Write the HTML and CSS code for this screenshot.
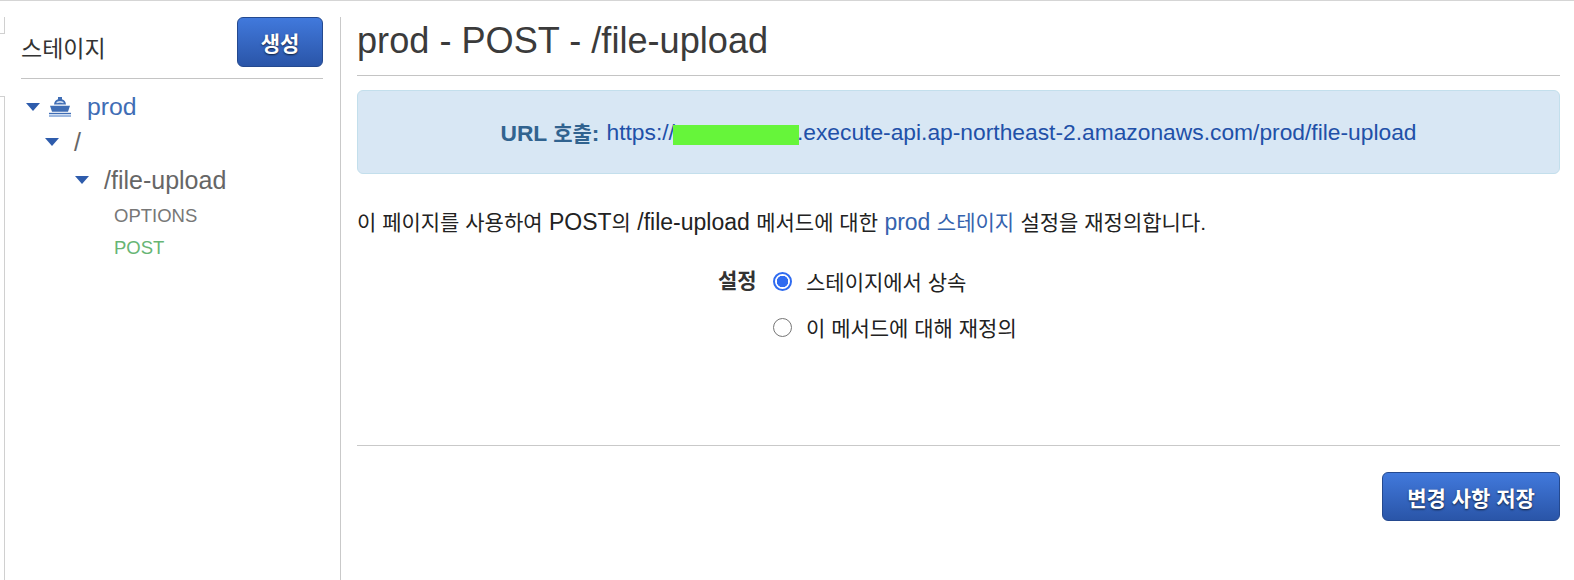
FILE: index.html
```html
<!DOCTYPE html>
<html lang="ko">
<head>
<meta charset="utf-8">
<title>prod - POST - /file-upload</title>
<link rel="stylesheet" href="styles.css">
</head>
<body>
<div class="page">
  <div class="rail">
    <div class="stub stub-top"></div>
    <div class="stub stub-bottom"></div>
  </div>
  <aside class="sidebar">
    <div class="side-head">
      <span class="side-title">스테이지</span>
      <button class="btn btn-create" type="button">생성</button>
    </div>
    <ul class="tree">
      <li class="row row-stage">
        <svg class="caret" viewBox="0 0 14 8"><path d="M0 0h14L7 8z"/></svg>
        <svg class="ship" viewBox="0 0 22 20"><path d="M9 0h4v2.200q3.500 1 4 5.300H5q.5-4.300 4-5.300z" fill="#3f6db5"/><path d="M7.500 5q3.500-1.800 7 0v1.200q-3.500-1-7 0z" fill="#cfdcf0"/><path d="M1 8.800h20l-2 6H3z" fill="#3f6db5"/><path d="M0 15.800h22v1.200H0z" fill="#3f6db5"/><path d="M0 17.500h22v2.500H0z" fill="#9db8e0"/></svg>
        <a class="stage-link">prod</a>
      </li>
      <li class="row row-root">
        <svg class="caret" viewBox="0 0 14 8"><path d="M0 0h14L7 8z"/></svg>
        <span class="res res-root">/</span>
      </li>
      <li class="row row-res">
        <svg class="caret" viewBox="0 0 14 8"><path d="M0 0h14L7 8z"/></svg>
        <span class="res">/file-upload</span>
      </li>
      <li class="method">OPTIONS</li>
      <li class="method method-post">POST</li>
    </ul>
  </aside>
  <main class="main">
    <h1 class="title">prod - POST - /file-upload</h1>
    <div class="invoke">
      <strong class="invoke-label">URL <span class="ko">호출</span>:</strong>
      <a class="invoke-url">https://<span class="redact"></span>.execute-api.ap-northeast-2.amazonaws.com/prod/file-upload</a>
    </div>
    <p class="desc"><span class="ko">이 페이지를 사용하여</span> POST<span class="ko">의</span> /file-upload <span class="ko">메서드에 대한</span> <a class="desc-link">prod <span class="ko">스테이지</span></a> <span class="ko">설정을 재정의합니다.</span></p>
    <div class="settings">
      <span class="settings-label">설정</span>
      <div class="options">
        <label class="option"><span class="radio radio-on"></span>스테이지에서 상속</label>
        <label class="option"><span class="radio"></span>이 메서드에 대해 재정의</label>
      </div>
    </div>
    <div class="actions">
      <button class="btn btn-save" type="button">변경 사항 저장</button>
    </div>
  </main>
</div>
</body>
</html>
```
FILE: styles.css
```css
* { box-sizing: border-box; }
html, body { margin: 0; height: 100%; background: #fff; overflow: hidden; }
body {
  font-family: "Liberation Sans", "Noto Sans CJK KR", sans-serif;
  color: #222;
}
.ko { font-size: 21px; }
.page {
  display: flex;
  height: 580px;
  border-top: 1px solid #d5d5d5;
}
.rail {
  width: 21px;
  flex: none;
  display: flex;
  flex-direction: column;
  padding-top: 16px;
}
.stub {
  width: 5px;
  border-right: 1px solid #d0d0d0;
}
.stub-top { height: 17px; border-bottom: 1px solid #d0d0d0; }
.stub-bottom { flex: 1; margin-top: 62px; border-top: 1px solid #d0d0d0; }
.sidebar {
  width: 319px;
  flex: none;
  padding: 16px 17px 0 0;
}
.side-head {
  display: flex;
  justify-content: space-between;
  align-items: flex-start;
  height: 62px;
  border-bottom: 1px solid #c4c4c4;
}
.side-title {
  font-size: 23px;
  line-height: 28px;
  margin-top: 18px;
  color: #333;
}
.btn {
  font-family: inherit;
  font-weight: 700;
  color: #fff;
  border: 1px solid #24498f;
  border-radius: 6px;
  background: linear-gradient(#4179dc, #2a55a8);
  text-shadow: 0 1px 2px rgba(0, 0, 0, .7);
  padding: 0;
}
.btn-create { width: 86px; height: 50px; font-size: 21px; }
.tree { list-style: none; margin: 0; padding: 0; }
.row { display: flex; align-items: center; }
.caret { width: 14px; height: 8px; fill: #2e5cac; flex: none; }
.row-stage { height: 30px; margin-top: 13px; padding-left: 5px; }
.ship { width: 22px; height: 20px; margin-left: 9px; flex: none; }
.stage-link { font-size: 24.800px; color: #3f6db5; margin-left: 16px; }
.row-root { height: 30px; margin-top: 5px; padding-left: 24px; }
.res { font-size: 25px; color: #666; }
.res-root { margin-left: 15px; }
.row-res { height: 30px; margin-top: 8px; padding-left: 54px; }
.row-res .res { margin-left: 15px; }
.method { font-size: 18.500px; line-height: 22px; padding-left: 93px; color: #777; margin-top: 10px; }
.method-post { color: #67b574; }
.main {
  flex: 1;
  margin: 16px 14px 0 0;
  padding-left: 16px;
  border-left: 1px solid #c9c9c9;
}
.title {
  margin: 0;
  height: 59px;
  border-bottom: 1px solid #c4c4c4;
  font-size: 36.150px;
  font-weight: 400;
  line-height: 48px;
  color: #3b3b3b;
}
.invoke {
  margin-top: 14px;
  height: 84px;
  border: 1px solid #c3dfec;
  border-radius: 6px;
  background: #d8e7f4;
  display: flex;
  align-items: center;
  justify-content: center;
  gap: 7px;
  font-size: 22.800px;
}
.invoke-label { color: #31638f; }
.invoke-url { color: #2150a8; }
.redact {
  display: inline-block;
  width: 126px;
  height: 20px;
  margin-left: -2px;
  margin-right: -2px;
  vertical-align: -5px;
  background: #66f53a;
}
.desc {
  margin: 34px 0 0;
  font-size: 23px;
  line-height: 28px;
  color: #222;
}
.desc-link { color: #3563ae; }
.settings {
  display: flex;
  margin-top: 28px;
  padding-left: 361px;
  height: 181px;
  border-bottom: 1px solid #c9c9c9;
}
.settings-label {
  font-size: 21px;
  font-weight: 700;
  line-height: 32px;
  color: #333;
  width: 55px;
  flex: none;
}
.options { display: flex; flex-direction: column; gap: 14px; }
.option {
  display: flex;
  align-items: center;
  height: 32px;
  font-size: 21px;
  color: #222;
}
.radio {
  width: 19px;
  height: 19px;
  border: 1.500px solid #767676;
  border-radius: 50%;
  margin-right: 14px;
  background: #fff;
}
.radio-on {
  border: 2px solid #2f6bf0;
  background: radial-gradient(circle, #2f6bf0 0 5.500px, #fff 6px);
}
.actions {
  display: flex;
  justify-content: flex-end;
  margin-top: 26px;
}
.btn-save { width: 178px; height: 49px; font-size: 21px; }
```
